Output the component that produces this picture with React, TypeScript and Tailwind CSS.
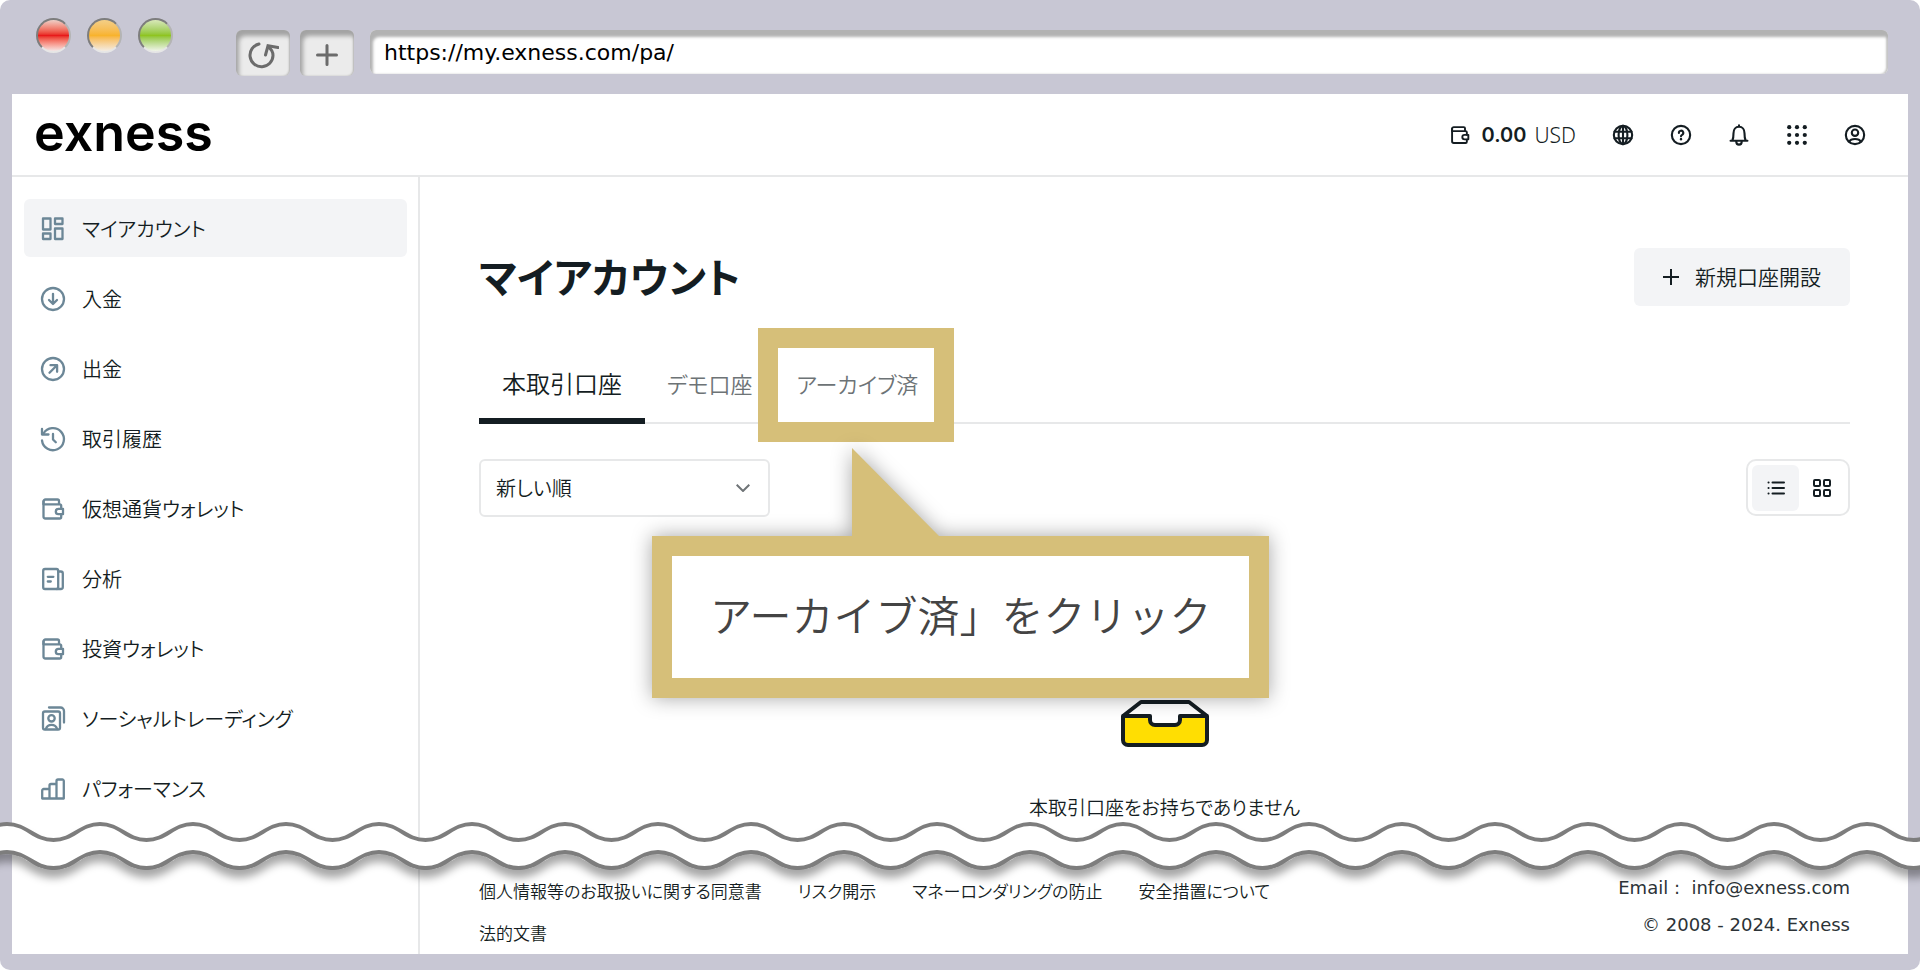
import type { ReactNode } from "react";

type IconProps = { className?: string; children: ReactNode; width?: number };

function Icon({ className = "size-6", children, width = 2.3 }: IconProps) {
  return (
    <svg
      viewBox="0 0 24 24"
      className={`${className} shrink-0 overflow-visible`}
      fill="none"
      stroke="currentColor"
      strokeWidth={width}
      strokeLinecap="round"
      strokeLinejoin="round"
      aria-hidden="true"
    >
      {children}
    </svg>
  );
}

const walletShape = (
  <>
    <path d="M2.5 4.5v15A2 2 0 0 0 4.500 21.500h14.200a1.500 1.500 0 0 0 1.500-1.500v-2.500" />
    <path d="M2.500 6.500v-2A2 2 0 0 1 4.500 2.500h12a1.500 1.500 0 0 1 1.500 1.500v3" />
    <path d="M2.500 7.300h16.200a1.500 1.500 0 0 1 1.500 1.500v3" />
    <path d="M22 11.800h-4.500a2.700 2.700 0 0 0 0 5.400H22z" />
  </>
);

const navItems = [
  {
    label: "マイアカウント",
    active: true,
    icon: <path d="M2 1.500h7.500v11H2zM14 1.500h7.500v5.500H14zM2 16.500h7.500v5.500H2zM14 11.500h7.500v10.500H14z" />,
  },
  {
    label: "入金",
    icon: (
      <>
        <circle cx="12" cy="12" r="11" />
        <path d="M12 6.800v10M8 13l4 4 4-4" />
      </>
    ),
  },
  {
    label: "出金",
    icon: (
      <>
        <circle cx="12" cy="12" r="11" />
        <path d="M8.500 15.800 16 8.300M9.500 8.200h6.600v6.600" />
      </>
    ),
  },
  {
    label: "取引履歴",
    icon: (
      <>
        <path d="M1 13.500A11 11 0 1 0 2.500 6.500" />
        <path d="M1 2v5.500h6.500M12 7v5.500l2.800 2.800" />
      </>
    ),
  },
  { label: "仮想通貨ウォレット", icon: walletShape },
  {
    label: "分析",
    icon: (
      <>
        <rect x="2.200" y="2" width="15" height="20" rx="1.800" />
        <path d="M17.200 4.500h2.600A2 2 0 0 1 21.800 6.500v13.500a2 2 0 0 1-2 2h-4" />
        <path d="M6.800 9.800h5.600M6.800 14.500h3" />
      </>
    ),
  },
  { label: "投資ウォレット", icon: walletShape },
  {
    label: "ソーシャルトレーディング",
    icon: (
      <>
        <rect x="2" y="4.500" width="17" height="18" rx="1.800" />
        <circle cx="10.500" cy="11.300" r="3.200" />
        <path d="M4.800 22c1-3 3-4.200 5.700-4.200s4.700 1.200 5.700 4.200M8 .500h11.500A3.500 3.500 0 0 1 23 4v11.500" />
      </>
    ),
  },
  {
    label: "パフォーマンス",
    icon: (
      <path d="M1.200 21.500V13.500a1.500 1.500 0 0 1 1.500-1.500H8.500V8.500A1.500 1.500 0 0 1 10 7h5.500V4A1.500 1.500 0 0 1 17 2.500h4A1.500 1.500 0 0 1 22.800 4v17.500zM8.500 12v9.500M15.500 7v14.500" />
    ),
  },
];

const actions = [
  {
    label: "言語",
    icon: (
      <>
        <circle cx="12" cy="12" r="10" />
        <ellipse cx="12" cy="12" rx="4.800" ry="10" />
        <path d="M12 2v20M2.800 8.500h18.400M2.800 15.500h18.400" />
      </>
    ),
  },
  {
    label: "ヘルプ",
    icon: (
      <>
        <circle cx="12" cy="12" r="10" />
        <path d="M9.700 9.700a2.400 2.400 0 1 1 3.500 2.100c-.8.400-1.200.8-1.200 1.500" />
        <path d="M12 16.400v.200" strokeWidth="2.600" />
      </>
    ),
  },
  {
    label: "通知",
    icon: (
      <path d="M2.800 18.200h18.400M4.800 18c.8-2 1.200-4 1.200-8 0-4 2.200-7 6-7s6 3 6 7c0 4 .400 6 1.200 8M9 19c0 2 1.200 3.500 3 3.500s3-1.500 3-3.500M12 1.500V3" />
    ),
  },
  {
    label: "アプリ",
    icon: (
      <g fill="currentColor" stroke="none">
        {[3.500, 12, 20.500].map((y) =>
          [3.500, 12, 20.500].map((x) => <circle key={`${x}-${y}`} cx={x} cy={y} r="2.300" />),
        )}
      </g>
    ),
  },
  {
    label: "プロフィール",
    icon: (
      <>
        <circle cx="12" cy="12" r="10" />
        <circle cx="12" cy="9.500" r="3.500" />
        <path d="M5.800 19.300c1-2.200 3.200-2.900 6.200-2.900s5.200.700 6.200 2.900" />
      </>
    ),
  },
];

const tabs = [
  { label: "本取引口座", active: true },
  { label: "デモ口座" },
  { label: "アーカイブ済", marked: true },
];

const footerLinks = [
  "個人情報等のお取扱いに関する同意書",
  "リスク開示",
  "マネーロンダリングの防止",
  "安全措置について",
  "法的文書",
];

function BrowserBar() {
  return (
    <div className="flex h-[94px] shrink-0 items-start pr-5 pl-6">
      <div className="mt-[18px] flex gap-4">
        <span className="size-[35px] rounded-full border-2 border-[#7d7d7d] border-r-[#b4b4b4] border-b-[#e6e6e6] bg-linear-to-b from-[#eccfc8] via-[#e8191b] via-50% to-[#f3e6e6]" />
        <span className="size-[35px] rounded-full border-2 border-[#7d7d7d] border-r-[#b4b4b4] border-b-[#e6e6e6] bg-linear-to-b from-[#f4cf86] via-[#f8b32c] via-50% to-[#f3ece2]" />
        <span className="size-[35px] rounded-full border-2 border-[#7d7d7d] border-r-[#b4b4b4] border-b-[#e6e6e6] bg-linear-to-b from-[#d8e8b8] via-[#8fc41f] via-50% to-[#f0f4e8]" />
      </div>
      <div className="mt-[30px] ml-[63px] flex gap-[10px]">
        <button
          type="button"
          aria-label="再読み込み"
          className="flex h-[46px] w-[54px] items-center justify-center rounded-md bg-[#ebebeb] pt-1 text-[#6b6b6b] shadow-[inset_3px_6px_4px_#a3a3a3,inset_-1px_0_2px_#b5b5b5]"
        >
          <svg viewBox="0 0 32 28" className="h-7 w-8" fill="none" stroke="currentColor" strokeWidth="3" strokeLinecap="round" aria-hidden="true">
            <path d="M12 3A11.500 11.500 0 1 0 26 14.500C26 11 24.500 8.500 22 6.500" />
            <path d="M18.500 14 21 4.800 31 6.500" strokeLinejoin="miter" />
          </svg>
        </button>
        <button
          type="button"
          aria-label="新しいタブ"
          className="flex h-[46px] w-[54px] items-center justify-center rounded-md bg-[#ebebeb] pt-1 text-[#6b6b6b] shadow-[inset_3px_6px_4px_#a3a3a3,inset_-1px_0_2px_#b5b5b5]"
        >
          <svg viewBox="0 0 22 22" className="size-[22px]" stroke="currentColor" strokeWidth="3" strokeLinecap="round" aria-hidden="true">
            <path d="M11 1.500v19M1.500 11h19" />
          </svg>
        </button>
      </div>
      <input
        aria-label="アドレス"
        defaultValue="https://my.exness.com/pa/"
        className="mt-[30px] ml-4 h-11 min-w-0 flex-1 rounded-md bg-white pr-3 pl-[14px] font-['DejaVu_Sans',sans-serif] text-[22px] font-normal text-black shadow-[inset_3px_7px_3px_#b2b2b2,inset_-2px_0_2px_#c4c4c4]"
      />
    </div>
  );
}

function Header() {
  return (
    <header className="flex h-[83px] shrink-0 items-center justify-between border-b-2 border-[#e7e8e9] pr-[42px] pl-[22px]">
      <a href="#home" className="pb-1 font-['Inter',sans-serif] text-[52px] leading-[60px] font-semibold text-black">
        exness
      </a>
      <div className="flex items-center gap-9">
        <button type="button" className="flex items-center gap-3">
          <Icon className="size-5">{walletShape}</Icon>
          <span className="flex items-center gap-2 leading-7">
            <strong className="font-['Inter',sans-serif] text-[20px] font-semibold">0.00</strong>
            <span className="font-['Noto_Sans',sans-serif] text-[21px] font-light">USD</span>
          </span>
        </button>
        {actions.map((action) => (
          <button key={action.label} type="button" aria-label={action.label}>
            <Icon className="size-[22px]">{action.icon}</Icon>
          </button>
        ))}
      </div>
    </header>
  );
}

function Sidebar() {
  return (
    <nav className="w-[408px] shrink-0 border-r-2 border-[#e7e8e9] pr-[11px] pl-3 pt-[22px]">
      <ul className="flex flex-col gap-3">
        {navItems.map((item) => (
          <li key={item.label}>
            <a
              href="#nav"
              className={`flex h-[58px] items-center gap-[17px] rounded-md px-[17px] pt-[1px] text-[20px] ${item.active ? "bg-[#f3f4f6]" : ""}`}
            >
              <Icon className="size-6 text-[#6c8797]">{item.icon}</Icon>
              {item.label}
            </a>
          </li>
        ))}
      </ul>
    </nav>
  );
}

function Callout() {
  return (
    <div className="absolute top-[359px] left-[232px] drop-shadow-[0_0_10px_rgba(0,0,0,0.35)]">
      <svg viewBox="0 0 88 89" className="absolute -top-[88px] left-[200px] h-[89px] w-[88px]" aria-hidden="true">
        <path d="M0 0 88 89H0z" fill="#d6bf79" />
      </svg>
      <p className="border-[20px] border-[#d6bf79] bg-white px-[38px] pt-[27px] pb-[33px] text-[42px] leading-[62px] whitespace-nowrap text-[#444] [font-feature-settings:normal]">
        アーカイブ済」をクリック
      </p>
    </div>
  );
}

const period = 93;
const crests = Array.from({ length: 46 }, (_, i) => i);
const wave = (y: number) =>
  `M-39.500 ${y + 8}` +
  crests
    .map((i) => {
      const x = -39.500 + i * period;
      return `C${x + 20} ${y + 8} ${x + 26.500} ${y - 8} ${x + 46.500} ${y - 8}S${x + 73} ${y + 8} ${x + 93} ${y + 8}`;
    })
    .join("");

function TornEdge() {
  return (
    <svg className="pointer-events-none absolute bottom-[80px] left-0 h-[70px] w-full" aria-hidden="true">
      <defs>
        <filter id="edge-shadow" x="0" y="-50%" width="100%" height="250%">
          <feDropShadow dx="0" dy="8" stdDeviation="4" floodColor="#000" floodOpacity="0.35" />
        </filter>
      </defs>
      <g filter="url(#edge-shadow)">
        <path d={wave(40)} fill="none" stroke="#7d7d7d" strokeWidth="4" />
        <path d={wave(26)} fill="none" stroke="#fff" strokeWidth="28" />
      </g>
      <path d={wave(26)} fill="none" stroke="#fff" strokeWidth="26" />
      <path d={wave(12)} fill="none" stroke="#7d7d7d" strokeWidth="4" />
      <path d={wave(40)} fill="none" stroke="#7d7d7d" strokeWidth="4" />
    </svg>
  );
}

function Main() {
  return (
    <main className="relative min-w-0 flex-1 pt-[71px] pr-[58px] pl-[59px]">
      <div className="flex h-[58px] items-center justify-between">
        <h1 className="pb-1 text-[41px] leading-[54px] font-bold">マイアカウント</h1>
        <button type="button" className="flex h-[58px] items-center gap-4 rounded-md bg-[#f3f4f6] px-[29px] text-[21px]">
          <svg viewBox="0 0 16 16" className="size-4" stroke="currentColor" strokeWidth="2" aria-hidden="true">
            <path d="M8 0v16M0 8h16" />
          </svg>
          新規口座開設
        </button>
      </div>

      <div role="tablist" className="mt-11 flex h-[74px] border-b-2 border-[#e7e8e9]">
        {tabs.map((tab) => (
          <button
            key={tab.label}
            type="button"
            role="tab"
            aria-selected={!!tab.active}
            className={`relative h-[74px] ${tab.active ? "border-b-6 border-[#141d22] px-[23px] pb-[2px] text-[24px]" : "px-[22px] pb-2 text-[22px] text-[#6d7376]"}`}
          >
            {tab.label}
            {tab.marked && (
              <span className="absolute -top-[22px] -left-[17px] h-[114px] w-[196px] border-[20px] border-[#d6bf79]" />
            )}
          </button>
        ))}
      </div>

      <div className="mt-[35px] flex items-start justify-between">
        <div className="relative w-[291px]">
          <select
            aria-label="並べ替え"
            className="h-[58px] w-full appearance-none rounded-md border-2 border-[#e7e8e9] bg-white px-[15px] text-[20px]"
          >
            <option>新しい順</option>
          </select>
          <svg viewBox="0 0 14 8" className="pointer-events-none absolute top-[25px] right-5 h-2 w-[14px]" fill="none" stroke="#6f7477" strokeWidth="2" aria-hidden="true">
            <path d="m.700.700 6.300 6.300L13.300.700" />
          </svg>
        </div>
        <div className="flex h-[57px] items-center rounded-[10px] border-2 border-[#e7e8e9] p-1">
          <button type="button" aria-label="リスト表示" className="flex h-[46px] w-[47px] items-center justify-center rounded-md bg-[#f3f4f6]">
            <svg viewBox="0 0 18 14" className="h-[14px] w-[18px]" stroke="currentColor" strokeWidth="2" strokeLinecap="round" aria-hidden="true">
              <path d="M5.500 1.500H17M5.500 7H17M5.500 12.500H17M1.500 1.500h.100M1.500 7h.100M1.500 12.500h.100" />
            </svg>
          </button>
          <button type="button" aria-label="グリッド表示" className="flex h-[46px] w-[45px] items-center justify-center">
            <svg viewBox="0 0 18 18" className="size-[18px]" fill="none" stroke="currentColor" strokeWidth="2" aria-hidden="true">
              <rect x="1" y="1" width="6" height="6" rx="1" />
              <rect x="11" y="1" width="6" height="6" rx="1" />
              <rect x="1" y="11" width="6" height="6" rx="1" />
              <rect x="11" y="11" width="6" height="6" rx="1" />
            </svg>
          </button>
        </div>
      </div>

      <div className="mt-[183px] flex flex-col items-center">
        <svg viewBox="0 0 88 47" className="h-[47px] w-[88px]" stroke="#141d22" strokeWidth="4" strokeLinejoin="round" aria-hidden="true">
          <path d="M2 16 20 2H68L86 16" fill="#fff" />
          <path d="M2 16H29V20a5 5 0 0 0 5 5H54a5 5 0 0 0 5-5V16H86V40a5 5 0 0 1-5 5H7a5 5 0 0 1-5-5z" fill="#ffde02" />
        </svg>
        <p className="mt-[46px] text-[19px] leading-7">本取引口座をお持ちでありません</p>
      </div>

      <footer className="mt-12 flex justify-between">
        <ul className="flex max-w-[860px] flex-wrap gap-x-9 gap-y-[14px] pt-2 text-[17px] leading-7">
          {footerLinks.map((link) => (
            <li key={link}>
              <a href="#legal">{link}</a>
            </li>
          ))}
        </ul>
        <address className="text-right font-['DejaVu_Sans','Noto_Sans_CJK_JP',sans-serif] text-[18px] leading-[37px] font-normal whitespace-nowrap text-[#2c3337] not-italic">
          <p>
            Email :&nbsp; <a href="mailto:info@exness.com">info@exness.com</a>
          </p>
          <p>© 2008 - 2024. Exness</p>
        </address>
      </footer>

      <Callout />
    </main>
  );
}

export default function App() {
  return (
    <div className="relative flex min-h-screen flex-col overflow-hidden rounded-[10px] bg-[#c8c7d4] px-3 pb-4 font-['Noto_Sans_CJK_JP',sans-serif] font-[350] text-[#141d22] [font-feature-settings:'palt']">
      <BrowserBar />
      <div className="flex flex-1 flex-col bg-white">
        <Header />
        <div className="flex flex-1">
          <Sidebar />
          <Main />
        </div>
      </div>
      <TornEdge />
    </div>
  );
}
